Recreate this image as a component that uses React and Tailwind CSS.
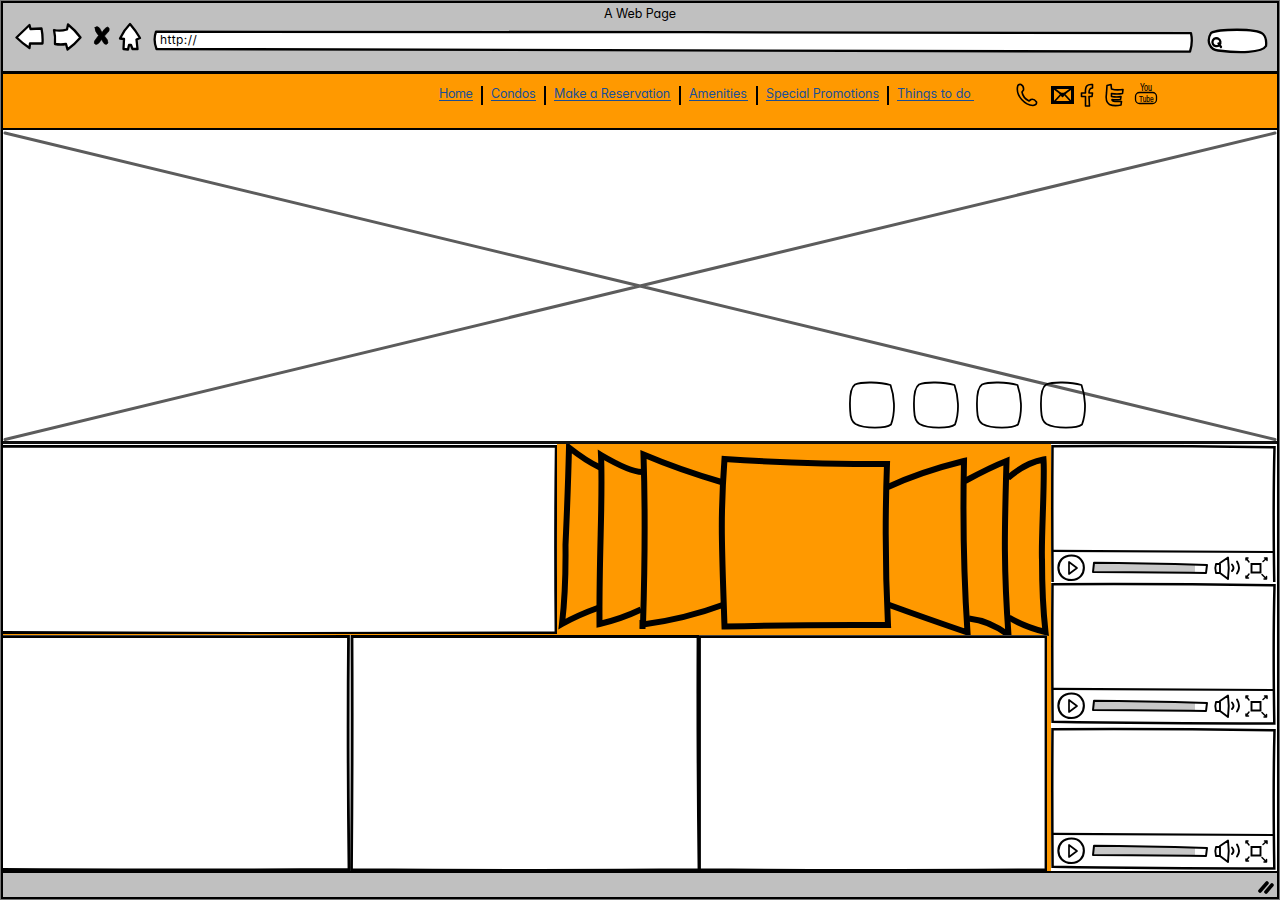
import React from "react";

const font = "font-['Inter','Noto_Sans',sans-serif] [font-feature-settings:'cv11','ss03']";

function Sketch({ box, className, sw = 2.5, children, fill = "none" }) {
  return (
    <svg viewBox={box} className={className} fill={fill} stroke="#000" strokeWidth={sw} strokeLinejoin="round" strokeLinecap="round" preserveAspectRatio="none">
      {children}
    </svg>
  );
}

function BrowserBar() {
  return (
    <header className="flex h-[68px] shrink-0 flex-col bg-[#c0c0c0]">
      <h1 className="h-[19px] text-center text-[12.5px] leading-[21px] tracking-[-0.1px] text-black">A Web Page</h1>
      <div className="flex h-[32px] items-start pl-[12px]">
        <Sketch box="15 22 128 30" className="h-[30px] w-[128px] shrink-0" sw={2.3}>
          <g fill="#fff">
            <path d="M16.5 37.5 29.5 25 30.5 29 41.500 28.5Q43 36 42.5 43.500L30 43.5 29.5 48Q22 43 16.5 37.5Z" />
            <path d="M54 30Q60 31.500 67 29.500L68 24.500Q75 30 80.500 37.500Q75 44 67.500 49.500L66 44Q61 45 55 44Q55.500 36 54 30Z" />
            <path d="M130 24Q136 31 140 38L136.500 39.500 137.500 49H132.500L131 45H129L128 49.500 123.500 49 124 39 120 38.500Q124 30 130 24Z" />
          </g>
          <path fill="#000" strokeWidth="0.600" d="M95 27.500Q97 25.500 99.500 28L102 32.500Q105 27.500 107.500 27Q110 27.500 109 31L104.500 36Q108 39.500 108 43Q106.500 45.500 104 43.500L101.500 39.500Q98.500 44.500 96 44.500Q93.500 44 94.500 41L98.500 35.500Q94.500 31 95 27.500Z" />
        </Sketch>
        <div className="relative ml-[10px] mt-[8px] h-[24px] w-[1040px] shrink-0">
          <Sketch box="153 30 1040 24" className="absolute inset-0 h-full w-full" sw={2.3}>
            <path fill="#fff" d="M156 31.700Q350 31 700 32.200T1191 33.200Q1193 42 1190 51.700Q900 51.500 600 50.200T156.500 49Q153 40 156 31.700Z" />
          </Sketch>
          <span className="relative block pl-[7px] text-[12px] leading-[20px] tracking-[0.45px]">http://</span>
        </div>
        <Sketch box="1206 28 62 26" className="ml-[13px] mt-[6px] h-[26px] w-[62px] shrink-0" sw={2.3}>
          <path fill="#fff" d="M1211 33C1218 29 1256 28 1263 34Q1267 38 1266 46C1262 53 1239 53 1218 50.500C1210 50 1206 41 1211 33Z" />
          <path d="M1216 38.200A4 4 0 1 0 1218 38.500ZM1218.500 43.500 1221 47" />
        </Sketch>
      </div>
    </header>
  );
}

const links = [
  ["Home", "w-[34px] tracking-[-0.4px]"],
  ["Condos", "w-[45px] tracking-[-0.25px]"],
  ["Make a Reservation", "w-[117px] tracking-[-0.1px]"],
  ["Amenities", "w-[59px] tracking-[-0.05px]"],
  ["Special Promotions", "w-[113px] tracking-[-0.08px]"],
  ["Things to do", "w-[77px] tracking-[0px]"],
];

function Nav() {
  return (
    <nav className="flex h-[59px] shrink-0 items-start border-b-2 border-t-[3px] border-black bg-[#ff9900] pl-[436px]">
      {links.map(([label, cls], i) => (
        <React.Fragment key={label}>
          {i > 0 && <i className="ml-[8px] mr-[8px] mt-[12px] h-[19px] w-[2px] shrink-0 bg-black" />}
          <a className={"mt-[12px] block h-[15px] shrink-0 whitespace-nowrap border-b border-[#1a4f96] text-[12.500px] leading-[15px] text-[#1a4f96] " + cls}>{label}</a>
        </React.Fragment>
      ))}
      <Sketch box="1014 80 146 30" className="ml-[40px] mt-[6px] h-[30px] w-[146px] shrink-0" sw={1.6}>
        <path d="M1017.500 87C1016 96 1025 105 1033 105.500Q1037 105 1036.500 102Q1034 98.500 1031 99.500L1029 101Q1023 98 1022 92L1023.500 90Q1024 86 1021 84.500Q1018 84 1017.500 87Z" />
        <path d="M1052.500 87.500H1072.500V102.500H1052.500Z" strokeWidth="3" strokeLinejoin="miter" />
        <path d="M1054 88.500 1062.500 95 1071.500 88.500M1054 102 1060 95.500M1071.500 102 1065.500 95.500" strokeWidth="1.800" />
        <path d="M1060 93.500H1065.500L1062.500 96.500Z" fill="#000" />
        <path d="M1085.500 106V96.500H1081.500V93H1085.500C1085 86 1087 84 1092.500 84.500V88Q1089 88 1089 93H1092.500L1092 96.500H1089L1089.500 106Z" />
        <path d="M1107 85.500 1111 84.500 1111.500 89Q1116 90.500 1123 89.500L1122.500 93.500Q1117 94.500 1111.500 93.500V96.500Q1117 97.500 1121 96.500L1120.500 99.500Q1115 100 1112 99.500Q1112 101.500 1115 101.500L1121.500 101.500 1121 105Q1114 106.500 1109.500 104.500Q1105 102 1106.500 93Z" />
        <rect x="1135.500" y="92.500" width="21" height="11" rx="4" strokeWidth="1.300" />
        <g fill="#000" stroke="#000" strokeWidth="0.200" fontFamily="Liberation Sans, sans-serif">
          <text x="1140" y="91" fontSize="10" textLength="12" lengthAdjust="spacingAndGlyphs">You</text>
          <text x="1139" y="102" fontSize="9.500" textLength="14.500" lengthAdjust="spacingAndGlyphs">Tube</text>
        </g>
      </Sketch>
    </nav>
  );
}

function Hero() {
  return (
    <section className="relative flex h-[314px] shrink-0 items-end border-b-[3px] border-[#111] bg-white">
      <Sketch box="3 130 1274 311" className="absolute inset-0 h-full w-full" sw={3}>
        <path stroke="#5c5c5c" d="M5 133 640 286 1275 439.500M5 439.500 640 286 1275 133" />
      </Sketch>
      <div className="relative mb-[12px] ml-[846px] flex gap-[17.500px]">
        {[0, 1, 2, 3].map((k) => (
          <Sketch key={k} box="849 381 46 48" className="h-[48px] w-[46px]" sw={1.8}>
            <path d="M855 384.500C862 381.500 880 382 890.500 385C894 395 896 411 891 424.500C886 428.500 865 429 855.500 424Q850.500 421 850.200 411C849.500 400 850 388 855 384.500Z" />
          </Sketch>
        ))}
      </div>
    </section>
  );
}

function Carousel() {
  return (
    <div className="h-[192px] w-[494px] shrink-0">
      <Sketch box="557 444 494 192" className="h-[192px] w-[494px]" sw={6}>
        <g strokeLinecap="butt" strokeLinejoin="miter">
          <path d="M600 467.500Q586 461 569 447.500C568 490 567 510 565.500 545Q566 590 562 624Q578 615 599 607.500" />
          <path d="M642 472Q630 472 601 455C603 500 599 550 599.500 624Q621 619 641 609.500" />
          <path d="M723 482.500Q680 470 643.500 454.500Q646 530 643 624.500Q685 619 724 604.500" />
          <path d="M642.500 620V629" />
          <path d="M724.500 459Q800 464 887 464Q884 545 888 625Q800 624.500 724.500 626.500C722 550 720 520 724.500 459Z" />
          <path d="M888 487Q920 472 964 461Q962 550 967.500 632.500Q925 618 888 604.500" />
          <path d="M965 481Q991 467 1006.500 461C1005 520 1003 560 1008.500 635Q990 621 969 618.500" />
          <path d="M1008 478Q1025 463 1043.500 459.500C1045 480 1041 540 1042 560Q1042 600 1045.500 632Q1025 627 1009 617.500" />
        </g>
      </Sketch>
    </div>
  );
}

function Panel({ className, box, d }) {
  return (
    <div className={"relative shrink-0 bg-white " + className}>
      <Sketch box={box} className="absolute inset-0 h-full w-full" sw={2.8}>
        <path d={d} strokeLinejoin="miter" />
      </Sketch>
    </div>
  );
}

function Video({ className }) {
  return (
    <div className={"relative shrink-0 overflow-hidden bg-white " + className}>
      <Sketch box="0 0 226 143" className="absolute left-0 top-0 h-[143px] w-[226px]" sw={2.5}>
        <path strokeLinejoin="miter" d="M1.500 2.200Q110 1.500 223.500 3.300Q222 60 223.300 141.500Q100 141.500 1.600 139.800Q1 70 1.500 2.200Z" />
        <path d="M2 106.800Q110 107 223 108" strokeWidth="2.200" />
      </Sketch>
      <div className="relative mt-[109px] flex h-[30px] items-center pl-[6px]">
        <Sketch box="1057 554 30 28" className="h-[28px] w-[30px]" sw={2.1}>
          <path d="M1071.500 555.500C1088 555.500 1088 580 1071.500 580C1054 580 1054 555.500 1071.500 555.500Z" />
          <path d="M1069 562V574L1077 568Z" strokeWidth="1.700" />
        </Sketch>
        <Sketch box="1091 561 118 14" className="ml-[4px] h-[14px] w-[118px]" sw={2}>
          <path d="M1093 563 1195 564V572.500L1093 571.500Z" fill="#c8c8c8" stroke="none" />
          <path d="M1094 562.800Q1140 563 1207 565L1206 573Q1140 572 1093 572Z" />
        </Sketch>
        <Sketch box="1213 556 56 26" className="ml-[4px] h-[26px] w-[56px]" sw={1.900}>
          <path d="M1220 564 1228 558.500Q1229.500 569 1228 580L1220 574M1216 565H1220V574H1216Q1214.500 569 1216 565ZM1232 565.500Q1235 569 1232 572M1237 562.500Q1241 569 1237 574.500" />
          <path d="M1251.500 565H1260.500V573.500H1251.500Z" strokeLinejoin="miter" />
          <path d="M1249 563 1246 559V561M1246 559H1248M1263 562.500 1267 559V561.500M1267 559H1264.500M1249 575 1246 579V577M1246 579H1248.500M1262 575.500 1266.500 580V577.500M1266.500 580H1264" strokeWidth="1.500" />
        </Sketch>
      </div>
    </div>
  );
}

export default function App() {
  return (
    <div className={"flex h-[900px] w-[1280px] flex-col overflow-hidden bg-[#777] p-px text-black " + font}>
      <div className="flex h-[898px] w-[1278px] flex-col border-2 border-black bg-[#ff9900]">
        <BrowserBar />
        <Nav />
        <Hero />
        <main className="flex h-[427px] shrink-0">
          <div className="flex w-[1048px] flex-col">
            <div className="flex h-[191px]">
              <Panel className="h-[190px] w-[554px]" box="3 444 554 190" d="M0 446.300H556.200Q555 540 556 632.700Q280 634 0 632.500" />
              <Carousel />
            </div>
            <div className="flex h-[236px]">
              <Panel className="h-[236px] w-[347px]" box="3 635 347 236" d="M0 636.700Q150 636.800 348.500 636.500Q347.500 750 349 869.500Q150 870.500 0 869.500" />
              <Panel className="h-[236px] w-[349px]" box="350 635 349 236" d="M352 636.500H698Q697.500 750 699 869.700Q550 871 351.500 869.700Q352.500 750 352 636.500Z" />
              <Panel className="h-[236px] w-[348px]" box="699 635 348 236" d="M699.500 636.700H1046Q1045.500 750 1046 869.700Q850 871 699.500 869.700Z" />
            </div>
          </div>
          <div className="flex w-[226px] flex-col bg-white">
            <Video className="h-[138px]" />
            <Video className="h-[145px]" />
            <Video className="h-[143px]" />
          </div>
        </main>
        <footer className="flex flex-1 items-start justify-end border-t-2 border-black bg-[#c0c0c0] pt-[6px]">
          <Sketch box="1257 879 20 16" className="h-[16px] w-[20px]" sw={3.6}>
            <path d="M1260 891 1267 883M1266 892 1272 885" />
          </Sketch>
        </footer>
      </div>
    </div>
  );
}
